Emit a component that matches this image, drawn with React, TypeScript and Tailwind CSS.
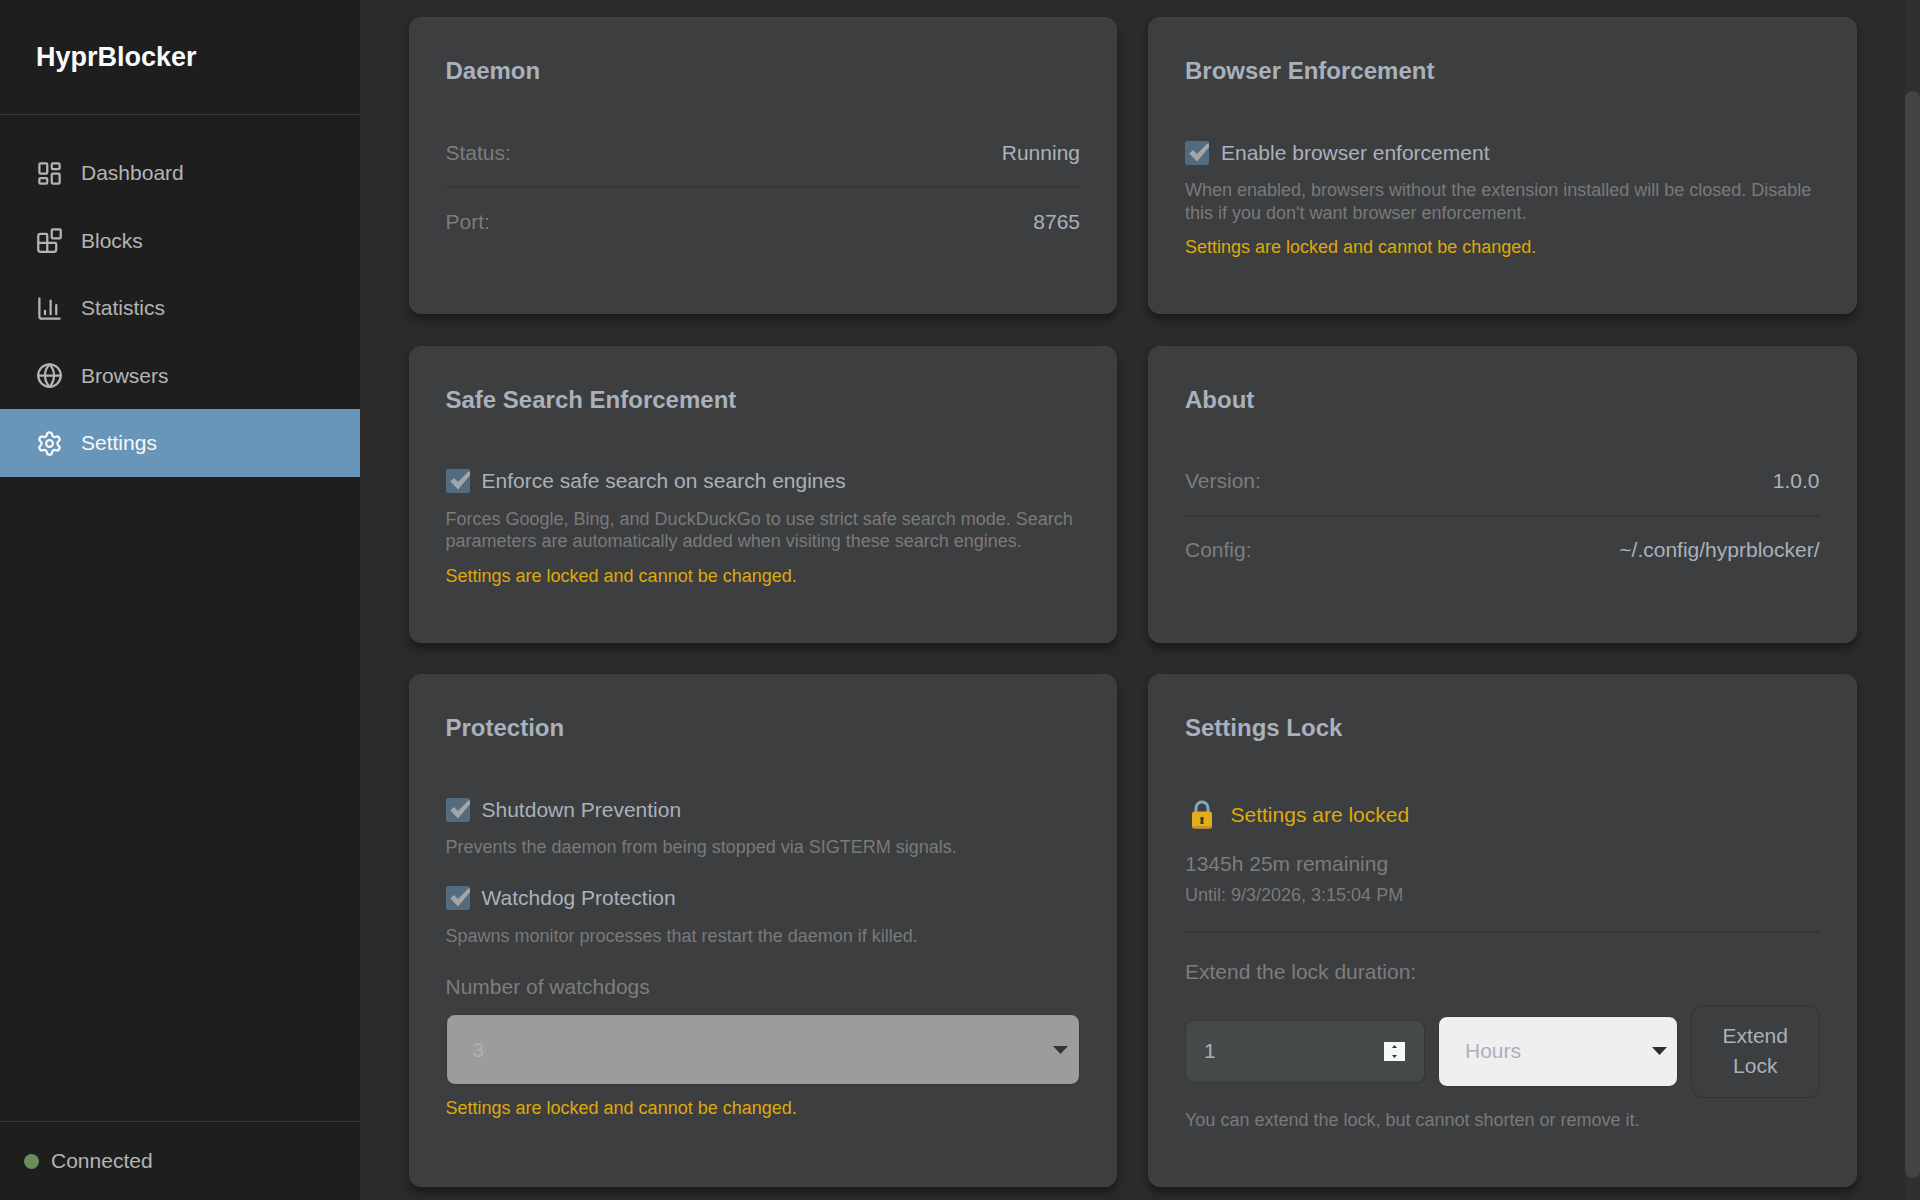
import { useState } from 'react';
import type { ReactNode } from 'react';
import { Blocks, Globe, LayoutDashboard, Settings } from 'lucide-react';
import clsx from 'clsx';

const ChartIcon = ({ className }: { className?: string }) => (
  <svg
    className={className}
    viewBox="0 0 24 24"
    fill="none"
    stroke="currentColor"
    strokeWidth={2}
    strokeLinecap="round"
    strokeLinejoin="round"
  >
    <path d="M3 3v16a2 2 0 0 0 2 2h16" />
    <path d="M18 17V9" />
    <path d="M13 17V5" />
    <path d="M8 17v-3" />
  </svg>
);

const navItems = [
  { label: 'Dashboard', icon: LayoutDashboard },
  { label: 'Blocks', icon: Blocks },
  { label: 'Statistics', icon: ChartIcon },
  { label: 'Browsers', icon: Globe },
  { label: 'Settings', icon: Settings },
];

function Sidebar() {
  const [active, setActive] = useState('Settings');

  return (
    <aside className="flex w-[360px] shrink-0 flex-col bg-[#1e1e1e]">
      <div className="h-[115px] border-b border-[#3a3a3a] px-9 pt-[37px]">
        <h1 className="text-[27px] leading-[41px] font-bold text-[#fafafa]">HyprBlocker</h1>
      </div>
      <nav className="flex flex-1 flex-col pt-[24.4px]">
        {navItems.map(({ label, icon: Icon }) => (
          <button
            key={label}
            type="button"
            onClick={() => setActive(label)}
            className={clsx(
              'flex h-[67.5px] shrink-0 items-center gap-[18px] px-9 text-left',
              active === label ? 'bg-[#6996b8] text-[#f5f8fa]' : 'text-[#b4b4b4]'
            )}
          >
            <Icon className="size-[27px]" />
            <span>{label}</span>
          </button>
        ))}
      </nav>
      <div className="flex h-[79px] items-center gap-3 border-t border-[#3a3a3a] px-6 text-[#b4b4b4]">
        <span className="size-[15px] rounded-full bg-[#6c8c5d]" />
        <span>Connected</span>
      </div>
    </aside>
  );
}

function Card({ title, children }: { title: string; children: ReactNode }) {
  return (
    <section className="rounded-xl border border-[#404141] bg-[#3d3e3f] px-9 pt-[35px] shadow-[0_6px_9px_rgba(0,0,0,0.4)]">
      <h2 className="mb-[29px] text-2xl leading-9 font-bold text-[#a9b1bd]">{title}</h2>
      {children}
    </section>
  );
}

function InfoRow({ label, value, last }: { label: string; value: string; last?: boolean }) {
  return (
    <div
      className={clsx(
        'flex justify-between',
        last ? 'pt-[17.5px]' : 'border-b-2 border-[#363738] pt-[18.7px] pb-[18px]'
      )}
    >
      <span className="text-[#7c7d7e]">{label}</span>
      <span className="text-[#a9b1bd]">{value}</span>
    </div>
  );
}

function Check({ label }: { label: string }) {
  return (
    <label className="flex h-[31px] items-center gap-3 text-[#a9b1bd]">
      <svg className="size-6" viewBox="0 0 24 24">
        <rect width="24" height="24" rx="2" fill="#526b7e" />
        <path d="M4.3 12.6L8 9l4 4L22.3 2.4H24v3.8L12 20.6z" fill="#a3a5a7" />
      </svg>
      <span>{label}</span>
    </label>
  );
}

function Hint({ children }: { children: ReactNode }) {
  return <p className="text-lg leading-[22.5px] text-[#797a7b]">{children}</p>;
}

function LockedNote() {
  return (
    <p className="text-lg leading-[22.5px] text-[#dfa90a]">Settings are locked and cannot be changed.</p>
  );
}

function Caret({ className }: { className?: string }) {
  return (
    <svg className={clsx('h-2 w-[15px]', className)} viewBox="0 0 15 8">
      <path d="M0 0h15L7.5 8z" fill="currentColor" />
    </svg>
  );
}

function Lock() {
  return (
    <svg className="h-[29px] w-[22px]" viewBox="0 0 22 29">
      <path
        d="M5 14V8.2a6 6.2 0 0 1 12 0V14"
        fill="none"
        stroke="#84a9bd"
        strokeWidth="3"
      />
      <rect x="1" y="11.5" width="20" height="17" rx="2.5" fill="#e3ad1a" />
      <path d="M1 26h20a2.5 2.5 0 0 1-2.5 2.5h-15A2.5 2.5 0 0 1 1 26z" fill="#c99230" />
      <circle cx="11" cy="18.5" r="1.8" fill="#49361f" />
      <path d="M10 18.5h2l.7 5.5H9.3z" fill="#49361f" />
    </svg>
  );
}

export default function App() {
  return (
    <div className="flex h-[1200px] w-[1920px] overflow-hidden bg-[#2b2b2b] font-['Liberation_Sans',Arial,sans-serif] text-[21px] leading-[31.5px]">
      <Sidebar />
      <main className="grid flex-1 grid-cols-[708.5px_708.5px] grid-rows-[297px_297px_513px] gap-x-[31px] gap-y-[31.5px] pt-[17px] pr-12 pl-[48.5px]">
        <Card title="Daemon">
          <InfoRow label="Status:" value="Running" />
          <InfoRow label="Port:" value="8765" last />
        </Card>

        <Card title="Browser Enforcement">
          <div className="pt-[19px]">
            <Check label="Enable browser enforcement" />
            <div className="mt-[11px] mb-3">
              <Hint>
                When enabled, browsers without the extension installed will be closed. Disable this if you
                don't want browser enforcement.
              </Hint>
            </div>
            <LockedNote />
          </div>
        </Card>

        <Card title="Safe Search Enforcement">
          <div className="pt-[19px]">
            <Check label="Enforce safe search on search engines" />
            <div className="mt-[11px] mb-3">
              <Hint>
                Forces Google, Bing, and DuckDuckGo to use strict safe search mode. Search parameters are
                automatically added when visiting these search engines.
              </Hint>
            </div>
            <LockedNote />
          </div>
        </Card>

        <Card title="About">
          <InfoRow label="Version:" value="1.0.0" />
          <InfoRow label="Config:" value="~/.config/hyprblocker/" last />
        </Card>

        <Card title="Protection">
          <div className="pt-[19px]">
            <Check label="Shutdown Prevention" />
            <div className="mt-[11px] mb-6">
              <Hint>Prevents the daemon from being stopped via SIGTERM signals.</Hint>
            </div>
            <Check label="Watchdog Protection" />
            <div className="mt-[11px] mb-6">
              <Hint>Spawns monitor processes that restart the daemon if killed.</Hint>
            </div>
            <p className="text-[#7c7d7e]">Number of watchdogs</p>
            <div className="mt-[11px] mb-3 flex h-[71px] items-center justify-between rounded-[9px] border border-[#353637] bg-[#9b9c9b] pr-[11px] pl-[26px] text-[#a9b1bd]">
              <span className="pt-px">3</span>
              <Caret className="mt-0.5 text-[#323536]" />
            </div>
            <LockedNote />
          </div>
        </Card>

        <Card title="Settings Lock">
          <div className="flex items-center pt-6 text-[#dfa90a]">
            <span className="mr-[18px] ml-[5.5px]">
              <Lock />
            </span>
            <span>Settings are locked</span>
          </div>
          <p className="mt-[17px] text-[#7c7d7e]">1345h 25m remaining</p>
          <div className="mt-[4.5px] border-b-2 border-[#363738] pb-[25px]">
            <Hint>Until: 9/3/2026, 3:15:04 PM</Hint>
          </div>
          <p className="mt-[23px] text-[#7c7d7e]">Extend the lock duration:</p>
          <div className="mt-[17px] mb-[11px] flex items-center gap-[13px]">
            <div className="flex h-[63px] w-[240px] items-center justify-between rounded-[9px] border border-[#353637] bg-[#464949] pr-[19px] pl-[18px] text-[#a9b1bd]">
              <span>1</span>
              <span className="flex h-[19px] w-[21px] flex-col items-center justify-between bg-[#f6f7f7] py-[3px] text-[#323536]">
                <svg className="h-[3px] w-[5px]" viewBox="0 0 5 3">
                  <path d="M0 3h5L2.5 0z" fill="currentColor" />
                </svg>
                <svg className="h-[3px] w-[5px]" viewBox="0 0 5 3">
                  <path d="M0 0h5L2.5 3z" fill="currentColor" />
                </svg>
              </span>
            </div>
            <div className="flex h-[71px] w-[240px] items-center justify-between rounded-[9px] border border-[#353637] bg-[#eeefee] pr-[10px] pl-[26px] text-[#a9b1bd]">
              <span>Hours</span>
              <Caret className="text-[#2c2e2f]" />
            </div>
            <button
              type="button"
              className="h-[93px] flex-1 rounded-xl border border-[#313233] px-6 leading-[30px] text-[#a9b1bd]"
            >
              Extend Lock
            </button>
          </div>
          <Hint>You can extend the lock, but cannot shorten or remove it.</Hint>
        </Card>
      </main>
      <div className="flex w-[15px] shrink-0 flex-col bg-[#2e3031] pt-[91px]">
        <div className="h-[1087px] rounded-full bg-[#444444]" />
      </div>
    </div>
  );
}
